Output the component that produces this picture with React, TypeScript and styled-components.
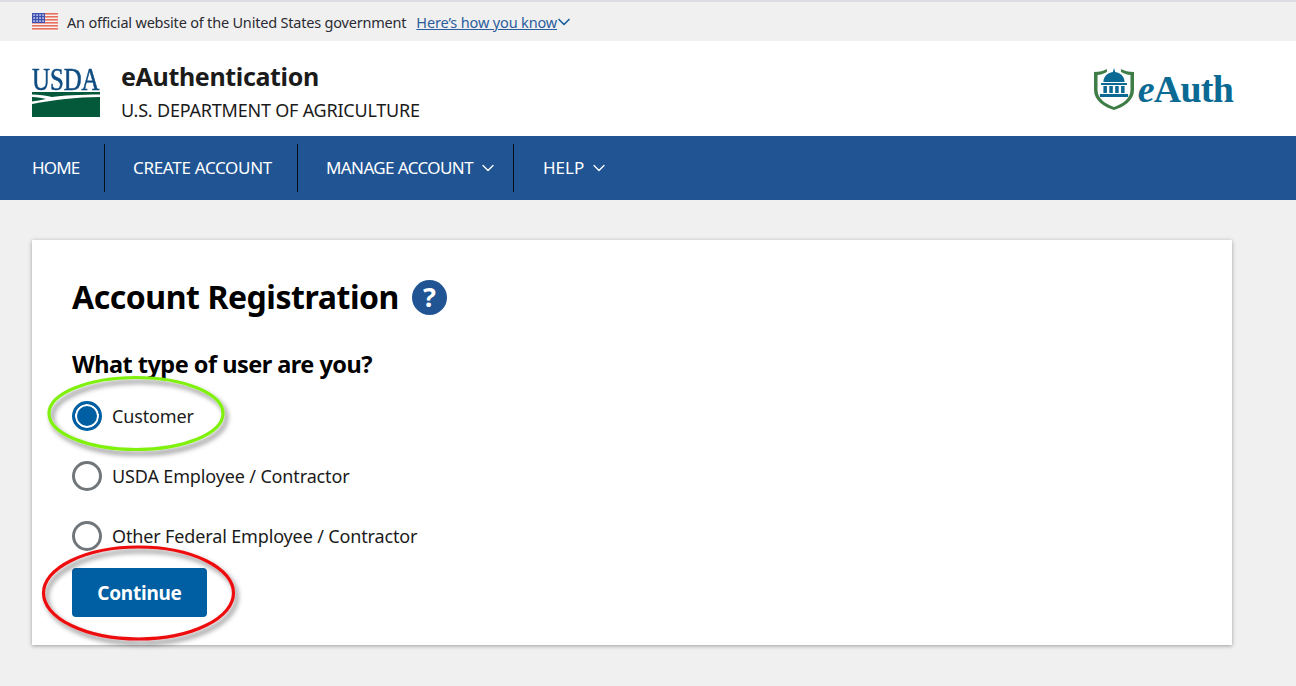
import React from 'react';
import styled, {createGlobalStyle} from "styled-components";
import {ChevronDown} from "lucide-react";

const GlobalStyle = createGlobalStyle`
  * { box-sizing: border-box; }
  html, body { margin: 0; height: 100%; overflow: hidden; }
  body {
    background: #f0f0f0;
    color: #1b1b1b;
    font-family: "Noto Sans", "Open Sans", sans-serif;
  }
`

const Flag = () => (
    <svg width="26" height="20" viewBox="0 0 26 20">
        <rect y="1" width="26" height="18" fill="#f7f3f1"/>
        {[1, 4, 7, 10, 13, 16].map(y => <rect key={y} y={y} width="26" height="1.6" fill="#e8705f"/>)}
        <rect y="1" width="13" height="10" fill="#3f51b0"/>
        {[3, 6, 9].map(y => [2, 5, 8, 11].map(x => <rect key={x + '-' + y} x={x - 0.7} y={y - 0.7} width="1.5" height="1.5" fill="#dfe2f5"/>))}
    </svg>
)

const UsdaLogo = () => (
    <UsdaWrap>
        <UsdaWord>USDA</UsdaWord>
        <svg width="68" height="25" viewBox="0 0 68 25">
            <path d="M0 0 H68 V2.5 C48 2.5 30 3.5 20 5 C14 3.5 7 2.5 0 2.5 Z" fill="#04593b"/>
            <path d="M0 5 C6 5 10 6 14 7 C9 8 4 9 0 9.5 Z" fill="#04593b"/>
            <path d="M0 12 C22 8 44 5 68 5 V25 H0 Z" fill="#04593b"/>
        </svg>
    </UsdaWrap>
)

const EAuthLogo = () => (
    <EAuthWrap>
        <svg width="40" height="44" viewBox="3 0 34 44" preserveAspectRatio="none">
            <path d="M3 5 C8 5 11 4 14 2 V5 C11 7 8 8 6 8 V23 C6 32 13 37 20 40 C27 37 34 32 34 23 V8 C32 8 29 7 26 5 V2 C29 4 32 5 37 5 V23 C37 34 28 40 20 43 C12 40 3 34 3 23 Z" fill="#3f7d46"/>
            <path d="M20 1 L21 5 C26 6 29 10 29 15 H11 C11 10 14 6 19 5 Z" fill="#0b6a94"/>
            <path d="M9 16 H31 V18 H9 Z" fill="#0b6a94"/>
            <path d="M11 19 H14 V26 H11 Z M16 19 H19 V26 H16 Z M21 19 H24 V26 H21 Z M26 19 H29 V26 H26 Z" fill="#0b6a94"/>
            <path d="M8 27 H32 V30 H8 Z" fill="#0b6a94"/>
        </svg>
        <EAuthWord><em>e</em>Auth</EAuthWord>
    </EAuthWrap>
)

const navItems = [
    {label: 'HOME', width: 105, pad: 32, track: -0.85},
    {label: 'CREATE ACCOUNT', width: 193, pad: 28, track: -0.3},
    {label: 'MANAGE ACCOUNT', width: 216, pad: 28, track: -0.6, menu: true},
    {label: 'HELP', pad: 29, track: 0, menu: true},
]

const userTypes = ['Customer', 'USDA Employee / Contractor', 'Other Federal Employee / Contractor']

export default function App() {
    return (
        <Page>
            <GlobalStyle/>
            <Banner>
                <Flag/>
                <BannerText>An official website of the United States government</BannerText>
                <KnowLink>Here’s how you know</KnowLink>
                <BannerChevron size={20} color="#1a5f9e" strokeWidth={2}/>
            </Banner>
            <Header>
                <Brand>
                    <UsdaLogo/>
                    <BrandText>
                        <BrandTitle>eAuthentication</BrandTitle>
                        <BrandSub>U.S. DEPARTMENT OF AGRICULTURE</BrandSub>
                    </BrandText>
                </Brand>
                <EAuthLogo/>
            </Header>
            <Nav>
                {navItems.map((item, i) => (
                    <NavItem key={item.label} $width={item.width} $pad={item.pad} $track={item.track} $divider={i < 3}>
                        {item.label}
                        {item.menu && <ChevronDown size={20} strokeWidth={1.6}/>}
                    </NavItem>
                ))}
            </Nav>
            <Main>
                <Card>
                    <TitleRow>
                        <Title>Account Registration</Title>
                        <HelpBadge>?</HelpBadge>
                    </TitleRow>
                    <Question>What type of user are you?</Question>
                    <RadioList>
                        {userTypes.map((label, i) => (
                            <RadioRow key={label}>
                                <Radio $checked={i === 0}/>
                                <span>{label}</span>
                            </RadioRow>
                        ))}
                    </RadioList>
                    <ContinueButton>Continue</ContinueButton>
                </Card>
            </Main>
            <Annotations width="1296" height="686" viewBox="0 0 1296 686">
                <defs>
                    <filter id="drop" x="-20%" y="-30%" width="140%" height="170%">
                        <feDropShadow dx="3" dy="4" stdDeviation="2.5" floodColor="#000" floodOpacity="0.5"/>
                    </filter>
                </defs>
                <ellipse cx="136" cy="413.5" rx="87" ry="36" fill="none" stroke="#80f010" strokeWidth="3.2" filter="url(#drop)"/>
                <ellipse cx="138.5" cy="593" rx="95" ry="46" fill="none" stroke="#ee0a0f" strokeWidth="3.2" filter="url(#drop)"/>
            </Annotations>
        </Page>
    );
}

const Page = styled.div`
  position: relative;
  width: 1296px;
  height: 686px;
  overflow: hidden;
`

const Banner = styled.div`
  display: flex;
  align-items: center;
  height: 41px;
  padding: 0 32px;
  background: #f0f0f0;
  border-top: 2px solid #dcdce2;
  font-size: 14.5px;
  color: #2b2b33;
`

const BannerText = styled.span`
  margin-left: 9px;
  letter-spacing: -0.2px;
`

const KnowLink = styled.a`
  margin-left: 10px;
  color: #2a5d9c;
  text-decoration: underline;
  letter-spacing: -0.15px;
`

const BannerChevron = styled(ChevronDown)`
  margin-left: -3px;
`

const Header = styled.header`
  display: flex;
  align-items: center;
  justify-content: space-between;
  height: 95px;
  padding: 0 63px 0 32px;
  background: #fff;
`

const Brand = styled.div`
  display: flex;
  align-items: center;
  gap: 21px;
`

const UsdaWrap = styled.div`
  display: flex;
  flex-direction: column;
  width: 68px;
  margin-top: 8px;
  gap: 1px;
`

const UsdaWord = styled.span`
  display: block;
  font-family: "Liberation Serif", serif;
  font-size: 31px;
  line-height: 22px;
  white-space: nowrap;
  transform: scaleX(0.8);
  transform-origin: left center;
  -webkit-text-stroke: 0.6px #0f4c81;
  color: #0f4c81;
`

const BrandText = styled.div`
  display: flex;
  flex-direction: column;
  gap: 6px;
  padding-top: 4px;
`

const BrandTitle = styled.div`
  font-size: 25px;
  line-height: 32px;
  font-weight: 700;
  letter-spacing: -0.35px;
  color: #1b1b1b;
`

const BrandSub = styled.div`
  font-size: 18px;
  line-height: 24px;
  letter-spacing: -0.21px;
  color: #1b1b1b;
`

const EAuthWrap = styled.div`
  display: flex;
  align-items: center;
  gap: 4px;
  margin-top: 1px;
`

const EAuthWord = styled.span`
  font-family: "Liberation Serif", serif;
  font-size: 38px;
  line-height: 44px;
  font-weight: 700;
  letter-spacing: -0.8px;
  color: #0b6a94;
`

const Nav = styled.nav`
  display: flex;
  align-items: center;
  height: 64px;
  background: #205493;
`

const NavItem = styled.div<{$width?: number; $pad: number; $track: number; $divider: boolean}>`
  display: flex;
  align-items: center;
  gap: 5px;
  height: 48px;
  width: ${p => p.$width ? p.$width + 'px' : 'auto'};
  padding-left: ${p => p.$pad}px;
  padding-bottom: 1px;
  border-right: ${p => p.$divider ? '1px solid #05101c' : 'none'};
  color: #fff;
  font-size: 17px;
  letter-spacing: ${p => p.$track}px;
`

const Main = styled.main`
  padding: 40px 64px 0 32px;
`

const Card = styled.section`
  display: flex;
  flex-direction: column;
  align-items: flex-start;
  height: 405px;
  padding: 36px 40px 0;
  background: #fff;
  box-shadow: 0 1px 4px rgba(0, 0, 0, 0.35);
`

const TitleRow = styled.div`
  display: flex;
  align-items: center;
  gap: 13px;
`

const Title = styled.h1`
  margin: 0;
  font-size: 32px;
  line-height: 42px;
  font-weight: 700;
  letter-spacing: -0.45px;
  color: #000;
`

const HelpBadge = styled.span`
  display: flex;
  align-items: center;
  justify-content: center;
  width: 35px;
  height: 35px;
  border-radius: 50%;
  background: #205493;
  color: #fff;
  font-size: 27px;
  line-height: 33px;
  padding-bottom: 2px;
  font-weight: 700;
`

const Question = styled.h2`
  margin: 30px 0 0;
  font-size: 23.5px;
  line-height: 32px;
  font-weight: 700;
  letter-spacing: -0.52px;
  color: #000;
`

const RadioList = styled.div`
  display: flex;
  flex-direction: column;
  margin-top: 21px;
  gap: 30px;
`

const RadioRow = styled.label`
  display: flex;
  align-items: center;
  gap: 10px;
  height: 30px;
  font-size: 18px;
  letter-spacing: -0.14px;
  color: #1b1b1b;
`

const Radio = styled.span<{$checked: boolean}>`
  width: 30px;
  height: 30px;
  border-radius: 50%;
  border: 3px solid ${p => p.$checked ? '#005ea2' : '#71767a'};
  background: ${p => p.$checked ? '#005ea2' : '#fff'};
  box-shadow: ${p => p.$checked ? 'inset 0 0 0 2px #fff' : 'none'};
`

const ContinueButton = styled.button`
  width: 135px;
  height: 49px;
  margin-top: 17px;
  border: 0;
  border-radius: 4px;
  background: #005ea2;
  color: #fff;
  font-family: inherit;
  font-size: 19px;
  font-weight: 700;
  letter-spacing: -0.25px;
`

const Annotations = styled.svg`
  position: absolute;
  left: 0;
  top: 0;
  pointer-events: none;
`
